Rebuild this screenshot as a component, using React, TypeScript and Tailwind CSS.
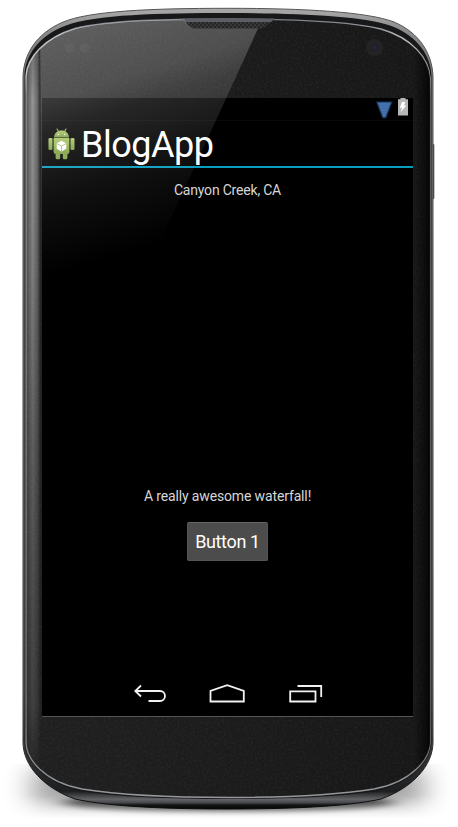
import React from "react";

const OUTER =
  "M23 76 C24 54 36 34 62 22.5 C88 11 150 8.3 228 8.3 C306 8.3 368 12 394 22 C420 33 432 54 433 76 V742 C433 766 412 788 381 799 C345 807 285 809 228 809 C171 809 111 807 75 799 C44 788 23 766 23 742 Z";
const BAND =
  "M24.5 76 C25 56 38 36 66 25.5 C95 14.5 160 13 228 13 C296 13 361 15.5 390 25.5 C418 36 431 56 431.5 76 V742 C431 762 410 784 376 791 C340 797 285 799 228 799 C171 799 116 797 80 791 C46 784 25 762 24.5 742 Z";
const FACE =
  "M26 76 C27 58 44 38 75 28.5 C110 20 170 19 228 19 C286 19 346 20.5 381 29 C412 38 429 58 430 78 V742 C430 759 412 782 374 789 C336 795 285 797.5 228 797.5 C171 797.5 120 795 82 789 C44 782 26 759 26 742 Z";

function PhoneBody() {
  return (
    <svg className="absolute inset-0" width="458" height="827" viewBox="0 0 458 827" aria-hidden="true">
      <defs>
        <filter id="shadow" x="-20%" y="-200%" width="140%" height="500%">
          <feGaussianBlur stdDeviation="14 14" />
        </filter>
        <filter id="contact" x="-20%" y="-200%" width="140%" height="500%">
          <feGaussianBlur stdDeviation="9 2.5" />
        </filter>
        <filter id="grain" x="0" y="0" width="100%" height="100%">
          <feTurbulence type="fractalNoise" baseFrequency="0.45" numOctaves="2" seed="4" />
          <feColorMatrix values="0 0 0 0 1  0 0 0 0 1  0 0 0 0 1  0.5 0 0 0 -0.19" />
        </filter>
        <linearGradient id="floor" x1="0" y1="740" x2="0" y2="820" gradientUnits="userSpaceOnUse">
          <stop offset="0" stopColor="#fff" />
          <stop offset="0.7" stopColor="#fff" />
          <stop offset="0.88" stopColor="#888" />
          <stop offset="1" stopColor="#000" />
        </linearGradient>
        <mask id="floorMask"><rect width="458" height="827" fill="url(#floor)" /></mask>
        <linearGradient id="rim" x1="0" y1="8" x2="0" y2="809" gradientUnits="userSpaceOnUse">
          <stop offset="0" stopColor="#aaa" />
          <stop offset="0.03" stopColor="#8a8a8a" />
          <stop offset="0.08" stopColor="#777" />
          <stop offset="0.85" stopColor="#606264" />
          <stop offset="0.93" stopColor="#333436" />
          <stop offset="0.978" stopColor="#1e1f20" />
          <stop offset="0.988" stopColor="#626467" />
          <stop offset="0.992" stopColor="#47494b" />
          <stop offset="0.995" stopColor="#151515" />
          <stop offset="1" stopColor="#050505" />
        </linearGradient>
        <linearGradient id="outline" x1="0" y1="0" x2="0" y2="1">
          <stop offset="0" stopColor="#555" />
          <stop offset="0.9" stopColor="#393939" />
          <stop offset="1" stopColor="#0a0a0a" />
        </linearGradient>
        <linearGradient id="bevel" x1="0" y1="0" x2="0" y2="1">
          <stop offset="0" stopColor="#7b7e83" />
          <stop offset="0.025" stopColor="#b5b7b9" />
          <stop offset="0.07" stopColor="#bbb" />
          <stop offset="0.1" stopColor="#74767a" />
          <stop offset="0.9" stopColor="#707275" />
          <stop offset="1" stopColor="#96989b" />
        </linearGradient>
        <linearGradient id="leftEdge" x1="24" y1="0" x2="42" y2="0" gradientUnits="userSpaceOnUse">
          <stop offset="0" stopColor="#fff" stopOpacity="0.12" />
          <stop offset="0.48" stopColor="#fff" stopOpacity="0.52" />
          <stop offset="0.75" stopColor="#fff" stopOpacity="0.32" />
          <stop offset="0.9" stopColor="#fff" stopOpacity="0.04" />
          <stop offset="1" stopColor="#fff" stopOpacity="0" />
        </linearGradient>
        <linearGradient id="edgeFade" x1="0" y1="40" x2="0" y2="780" gradientUnits="userSpaceOnUse">
          <stop offset="0" stopColor="#aaa" />
          <stop offset="0.08" stopColor="#fff" />
          <stop offset="0.25" stopColor="#ddd" />
          <stop offset="0.55" stopColor="#888" />
          <stop offset="0.9" stopColor="#444" />
          <stop offset="1" stopColor="#000" />
        </linearGradient>
        <mask id="edgeMask"><rect width="60" height="827" fill="url(#edgeFade)" /></mask>
        <linearGradient id="rightEdge" x1="414" y1="0" x2="430" y2="0" gradientUnits="userSpaceOnUse">
          <stop offset="0" stopColor="#000" stopOpacity="0" />
          <stop offset="0.8" stopColor="#000" stopOpacity="0.6" />
          <stop offset="1" stopColor="#000" stopOpacity="0.9" />
        </linearGradient>
        <linearGradient id="faceFill" x1="0" y1="0" x2="1" y2="0">
          <stop offset="0" stopColor="#202020" />
          <stop offset="1" stopColor="#171717" />
        </linearGradient>
        <pattern id="mesh" width="4" height="4" patternUnits="userSpaceOnUse">
          <rect width="4" height="4" fill="#383838" />
          <path d="M0 0h2v2h-2zM2 2h2v2h-2z" fill="#262626" />
        </pattern>
        <clipPath id="faceClip"><path d={FACE} /></clipPath>
      </defs>
      <g mask="url(#floorMask)">
        <rect x="30" y="768" width="396" height="40" rx="18" fill="#000" opacity="0.4" filter="url(#shadow)" />
        <ellipse cx="228" cy="803" rx="165" ry="10" fill="#000" opacity="0.8" filter="url(#contact)" />
      </g>
      <rect x="432" y="144" width="2.3" height="55" rx="1" fill="#444" />
      <path d={OUTER} fill="url(#rim)" stroke="url(#outline)" strokeWidth="1" />
      <path d={BAND} fill="#17181a" />
      <path d={FACE} fill="url(#faceFill)" stroke="url(#bevel)" strokeWidth="1.4" />
      <g clipPath="url(#faceClip)">
        <rect x="24" y="15" width="409" height="785" filter="url(#grain)" opacity="0.18" />
        <rect x="24" y="20" width="18" height="780" fill="url(#leftEdge)" mask="url(#edgeMask)" />
        <rect x="414" y="15" width="19" height="785" fill="url(#rightEdge)" />
      </g>
      <path d="M181 19.5 H275 L268 24 Q265 28.5 260 28.5 H193 Q190 28 188 25 Z" fill="url(#mesh)" />
      <path d="M181 18.5 H275 L271 22 H186 Z" fill="#5b5e64" />
      <circle cx="69.5" cy="48" r="5" fill="#fff" opacity="0.04" />
      <circle cx="84.5" cy="48" r="5" fill="#fff" opacity="0.04" />
      <circle cx="374.5" cy="47.5" r="8.5" fill="#242426" />
      <circle cx="374.5" cy="47.5" r="4" fill="#202026" />
      <circle cx="374.5" cy="47.5" r="1.7" fill="#26264a" />
    </svg>
  );
}

function Glare() {
  return (
    <svg className="pointer-events-none absolute inset-0" width="458" height="827" viewBox="0 0 458 827" aria-hidden="true">
      <defs>
        <linearGradient id="glare" x1="100" y1="20" x2="174" y2="260" gradientUnits="userSpaceOnUse">
          <stop offset="0" stopColor="#fff" stopOpacity="0.28" />
          <stop offset="0.25" stopColor="#fff" stopOpacity="0.22" />
          <stop offset="0.36" stopColor="#fff" stopOpacity="0.15" />
          <stop offset="0.62" stopColor="#fff" stopOpacity="0.065" />
          <stop offset="0.92" stopColor="#fff" stopOpacity="0" />
        </linearGradient>
        <clipPath id="glareClip"><path d={FACE} /></clipPath>
      </defs>
      <g clipPath="url(#glareClip)">
        <path d="M40 15 H181 L188 25 L193 28.5 H258 L229 92 L148 268 L42 310 Z" fill="url(#glare)" />
      </g>
    </svg>
  );
}

function AndroidIcon() {
  return (
    <svg width="27" height="32" viewBox="0 0 27 32" aria-hidden="true">
      <defs>
        <linearGradient id="droid" x1="0" y1="0" x2="0" y2="1">
          <stop offset="0" stopColor="#abc766" />
          <stop offset="1" stopColor="#7c9d40" />
        </linearGradient>
      </defs>
      <path d="M9 1 10.8 4M18 1 16.2 4" stroke="#97b657" strokeWidth="1.1" strokeLinecap="round" />
      <path d="M6 9.4C6.3 5 9.3 2.6 13.5 2.6S20.7 5 21 9.4Z" fill="url(#droid)" />
      <circle cx="10.3" cy="6.5" r="0.7" fill="#fff" />
      <circle cx="16.7" cy="6.5" r="0.7" fill="#fff" />
      <rect x="0.5" y="10" width="4" height="12" rx="1.3" fill="url(#droid)" />
      <rect x="22.5" y="10" width="4" height="12" rx="1.3" fill="url(#droid)" />
      <rect x="7.6" y="24" width="4.6" height="7.3" rx="1.6" fill="#82a246" />
      <rect x="14.8" y="24" width="4.6" height="7.3" rx="1.6" fill="#82a246" />
      <path d="M5.6 10.1H21.4V24Q21.4 26 19.4 26H7.6Q5.6 26 5.6 24Z" fill="url(#droid)" />
      <path d="M13.5 12.8 18.3 15.2V20.8L13.5 23.6 8.7 20.8V15.2Z" fill="#fff" />
      <path d="M8.7 15.5 13.5 18 18.3 15.5M13.5 18V23.5" fill="none" stroke="#a1b975" strokeWidth="0.9" />
    </svg>
  );
}

function StatusBar() {
  return (
    <div className="flex h-[23px] items-start justify-end border-b border-[#080808] pr-[5px]">
      <svg width="18" height="20" viewBox="0 0 18 20" className="mr-[4px] mt-[2px]" aria-hidden="true">
        <path d="M1 2.2H15.5L9.7 17.5H6.8Z" fill="none" stroke="#16345c" strokeWidth="1.5" />
        <path d="M1.5 2.5H15L9.4 17H7.1Z" fill="#4472ad" />
        <path d="M2.5 5.5H14M3.5 8.5H13M5 11.5H11.5M6.5 14H10" stroke="#3c659c" strokeWidth="0.6" />
      </svg>
      <svg width="10" height="18" viewBox="0 0 10 18" aria-hidden="true">
        <path d="M2.5 0H7.5V1.3H10V17.5H0V1.3H2.5Z" fill="#b6b6b6" />
        <path d="M4 4H7.2L6 7.5H8.3L2.7 14 4 9.7H1.8Z" fill="#fff" />
      </svg>
    </div>
  );
}

function NavigationBar() {
  return (
    <nav className="mt-auto flex h-[45px] items-center pl-[92px] pt-px">
      <svg width="34" height="20" viewBox="0 0 34 20" fill="none" stroke="#f2f2f2" strokeWidth="1.8" aria-label="Back">
        <path d="M7 1.5 1.3 7 7 12.5M1.5 7H26A5 5 0 0 1 26 17H14.5" />
      </svg>
      <svg width="36" height="20" viewBox="0 0 36 20" className="ml-[41px]" fill="none" stroke="#f2f2f2" strokeWidth="1.8" aria-label="Home">
        <path d="M1.5 17.5V6.8L18.2 1.2 34.8 6.8V17.5Z" />
      </svg>
      <svg width="34" height="20" viewBox="0 0 34 20" className="ml-[44px]" fill="none" stroke="#f2f2f2" strokeWidth="1.8" aria-label="Recent apps">
        <path d="M1.2 7.4H26.5V17.5H1.2ZM8.5 2H32.2V13" />
      </svg>
    </nav>
  );
}

export default function App() {
  return (
    <main className="relative h-[827px] w-[458px] overflow-hidden bg-white font-['Roboto',sans-serif]">
      <PhoneBody />
      <div className="relative pl-[42px] pt-[98px]">
        <section className="flex h-[618px] w-[371px] flex-col bg-black text-white">
          <StatusBar />
          <header className="flex h-[47px] items-center border-b-2 border-[#079dbe] pl-[6px]">
            <AndroidIcon />
            <h1 className="ml-[6px] pt-[3px] text-[36px] leading-[42px] tracking-[-0.5px]">BlogApp</h1>
          </header>
          <p className="mt-[12px] text-center text-sm leading-5 tracking-[-0.2px] text-[#d6d6d6]">Canyon Creek, CA</p>
          <p className="mt-[286px] text-center text-sm leading-5 tracking-[-0.14px] text-[#d6d6d6]">A really awesome waterfall!</p>
          <button className="mx-auto mt-[16px] h-[39px] w-[81px] rounded-[2px] border border-t-[#666] border-x-[#555] border-b-[#555] bg-[#4c4c4c] text-lg leading-none tracking-[-0.35px]">
            Button 1
          </button>
          <NavigationBar />
        </section>
        <div className="h-px w-[371px] bg-[#555]" />
      </div>
      <Glare />
    </main>
  );
}
